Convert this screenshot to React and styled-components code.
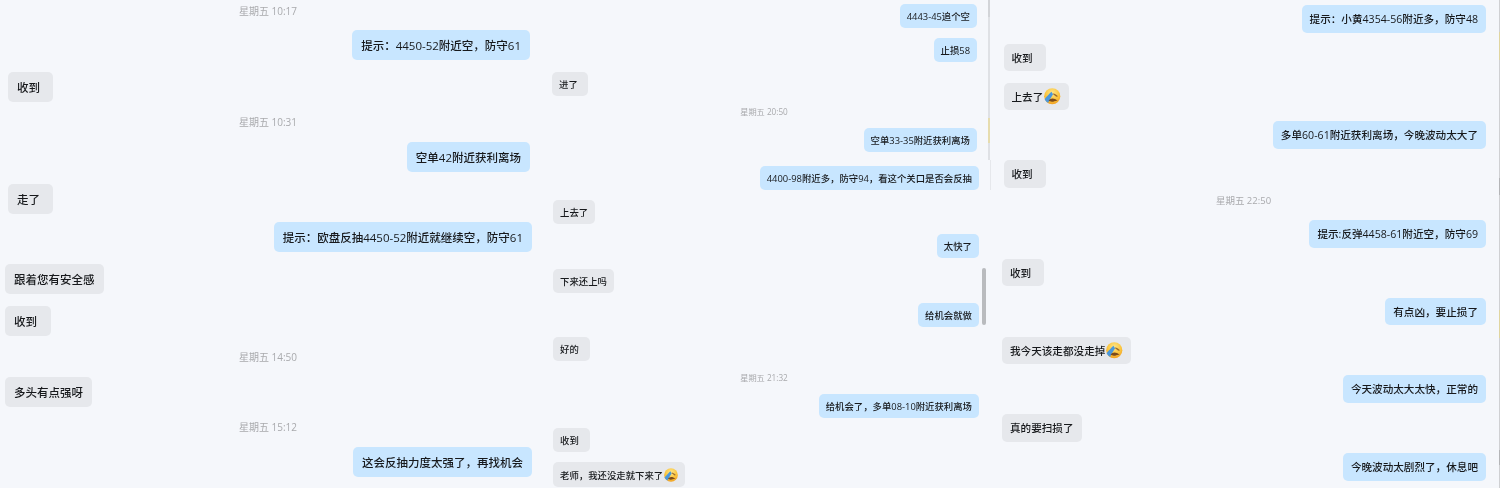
import React from "react";
import styled, { createGlobalStyle } from "styled-components";

const Global = createGlobalStyle`
  html, body { margin: 0; padding: 0; background: #f5f7fb; }
  #root { width: 1500px; height: 488px; overflow: hidden; }
`;

const Page = styled.main`
  position: relative;
  display: grid;
  grid-template-columns: 540px 450px 510px;
  width: 1500px;
  height: 488px;
  overflow: hidden;
  background: #f5f7fb;
  font-family: "Open Sans", "Noto Sans CJK SC", sans-serif;
  filter: blur(0.4px);
`;

const Column = styled.section`
  display: flex;
  flex-direction: column;
  height: 488px;
  overflow: hidden;
  font-size: ${(p) => p.$font}px;
`;

const Stamp = styled.div`
  flex: none;
  height: ${(p) => p.$h}px;
  line-height: ${(p) => p.$h}px;
  margin-top: ${(p) => p.$gap}px;
  padding-right: ${(p) => p.$shift}px;
  text-align: center;
  font-size: ${(p) => p.$font}px;
  color: #a9aaad;
`;

const Row = styled.div`
  flex: none;
  display: flex;
  justify-content: ${(p) => (p.$side === "r" ? "flex-end" : "flex-start")};
  margin-top: ${(p) => p.$gap}px;
  padding: ${(p) => (p.$side === "r" ? `0 ${p.$inset}px 0 0` : `0 0 0 ${p.$inset}px`)};
`;

const Bubble = styled.div`
  display: flex;
  align-items: center;
  box-sizing: border-box;
  height: ${(p) => p.$h}px;
  min-width: ${(p) => p.$min || 0}px;
  padding: 0 ${(p) => p.$pad}px;
  border-radius: 5px;
  white-space: nowrap;
  font-weight: 500;
  color: #17191c;
  background: ${(p) => (p.$side === "r" ? "#c8e6ff" : "#e6e8ec")};
`;

const EmojiSvg = styled.svg`
  flex: none;
  width: ${(p) => p.$size}px;
  height: ${(p) => p.$size}px;
  margin-left: 1px;
`;

const Divider = styled.div`
  position: absolute;
  left: 988px;
  top: 0;
  width: 2px;
  height: 160px;
  background: linear-gradient(#d2d4d8 0 17px, #dfe1e5 17px 118px, #e6dcae 118px 143px, #dfe1e5 143px);
`;

const DividerTail = styled.div`
  position: absolute;
  left: 990px;
  top: 160px;
  width: 1px;
  height: 30px;
  background: #e6e8ec;
`;

const Thumb = styled.div`
  position: absolute;
  left: 982px;
  top: 268px;
  width: 4px;
  height: 57px;
  border-radius: 2px;
  background: #b9bbbe;
`;

const RightEdge = styled.div`
  position: absolute;
  right: 0;
  top: 0;
  width: 1px;
  height: 488px;
  background: linear-gradient(
    #cfd0d3 0 32px,
    #e0d5a0 32px 60px,
    #cfd0d3 60px 178px,
    #b4b5b8 178px 195px,
    #cfd0d3 195px 310px,
    #e0d5a0 310px 338px,
    #cfd0d3 338px 450px,
    #b4b5b8 450px 465px,
    #cfd0d3 465px
  );
`;

const Emoji = ({ size, id }) => (
  <EmojiSvg $size={size} viewBox="0 0 20 20" aria-hidden="true">
    <defs>
      <radialGradient id={id} cx="50%" cy="30%" r="75%">
        <stop offset="0%" stopColor="#fde68a" />
        <stop offset="55%" stopColor="#fbc63f" />
        <stop offset="100%" stopColor="#ef9a1c" />
      </radialGradient>
    </defs>
    <circle cx="10" cy="10" r="9.8" fill={`url(#${id})`} />
    <path d="M9 4.5 C6.5 7 3.5 10 .8 13.5 C1.8 15.5 3.5 17 5 17.8 C7 14 9.5 10 11 7.5 Z" fill="#4a98dc" />
    <path d="M11.5 6.5 C13.5 7.5 15.5 8.5 17 10 L15 10.6 C13.5 9.4 12.5 8.4 11 7.5 Z" fill="#9a6a2c" />
    <path d="M5.5 15.5 C8 12 12 11.5 16.5 15.5 C13.5 14.8 12 17 9.5 16.8 C8 16.6 6.8 15.8 5.5 15.5 Z" fill="#7a4a1c" />
  </EmojiSvg>
);

const col1 = [
  { time: "星期五 10:17", gap: 4 },
  { side: "r", gap: 12, inset: 10, text: "提示：4450-52附近空，防守61" },
  { side: "l", gap: 12, inset: 8, text: "收到", min: 45 },
  { time: "星期五 10:31", gap: 13 },
  { side: "r", gap: 13, inset: 10, text: "空单42附近获利离场" },
  { side: "l", gap: 12, inset: 8, text: "走了", min: 45 },
  { side: "r", gap: 8, inset: 8, text: "提示：欧盘反抽4450-52附近就继续空，防守61" },
  { side: "l", gap: 12, inset: 5, text: "跟着您有安全感" },
  { side: "l", gap: 12, inset: 5, text: "收到", min: 46 },
  { time: "星期五 14:50", gap: 14 },
  { side: "l", gap: 13, inset: 5, text: "多头有点强呀" },
  { time: "星期五 15:12", gap: 13 },
  { side: "r", gap: 13, inset: 8, text: "这会反抽力度太强了，再找机会" },
];

const col2 = [
  { side: "r", gap: 4, inset: 13, text: "4443-45追个空" },
  { side: "r", gap: 10, inset: 13, text: "止损58" },
  { side: "l", gap: 10, inset: 12, text: "进了", min: 36 },
  { time: "星期五 20:50", gap: 10 },
  { side: "r", gap: 10, inset: 13, text: "空单33-35附近获利离场" },
  { side: "r", gap: 14, inset: 11, text: "4400-98附近多，防守94，看这个关口是否会反抽" },
  { side: "l", gap: 10, inset: 13, text: "上去了" },
  { side: "r", gap: 10, inset: 11, text: "太快了" },
  { side: "l", gap: 11, inset: 13, text: "下来还上吗" },
  { side: "r", gap: 10, inset: 11, text: "给机会就做" },
  { side: "l", gap: 10, inset: 13, text: "好的", min: 37 },
  { time: "星期五 21:32", gap: 11 },
  { side: "r", gap: 10, inset: 11, text: "给机会了，多单08-10附近获利离场" },
  { side: "l", gap: 10, inset: 13, text: "收到", min: 37 },
  { side: "l", gap: 10, inset: 13, h: 25, text: "老师，我还没走就下来了", emoji: true },
];

const col3 = [
  { side: "r", gap: 5, inset: 14, text: "提示：小黄4354-56附近多，防守48" },
  { side: "l", gap: 11, inset: 13.5, text: "收到", min: 42 },
  { side: "l", gap: 11.5, inset: 13.5, text: "上去了", emoji: true },
  { side: "r", gap: 11, inset: 14, text: "多单60-61附近获利离场，今晚波动太大了" },
  { side: "l", gap: 11.5, inset: 13.5, text: "收到", min: 42 },
  { time: "星期五 22:50", gap: 6.5 },
  { side: "r", gap: 12, inset: 14, text: "提示:反弹4458-61附近空，防守69" },
  { side: "l", gap: 11, inset: 12, text: "收到", min: 42 },
  { side: "r", gap: 11.5, inset: 14, text: "有点凶，要止损了" },
  { side: "l", gap: 11.5, inset: 12, text: "我今天该走都没走掉", emoji: true },
  { side: "r", gap: 11, inset: 14, text: "今天波动太大太快，正常的" },
  { side: "l", gap: 11.5, inset: 12, text: "真的要扫损了" },
  { side: "r", gap: 11.5, inset: 14, text: "今晚波动太剧烈了，休息吧" },
];

const columns = [
  { items: col1, font: 11.5, pad: 9, h: 30, stampFont: 10, stampH: 14, shift: 4, emoji: 18 },
  { items: col2, font: 9.4, pad: 7, h: 24, stampFont: 8.2, stampH: 12, shift: 2, emoji: 14 },
  { items: col3, font: 10.6, pad: 8, h: 27.5, stampFont: 9.5, stampH: 14, shift: 3, emoji: 16.5 },
];

export default function App() {
  return (
    <Page>
      <Global />
      {columns.map((c, i) => (
        <Column key={i} $font={c.font}>
          {c.items.map((m, j) =>
            m.time ? (
              <Stamp key={j} $gap={m.gap} $h={c.stampH} $font={c.stampFont} $shift={c.shift}>
                {m.time}
              </Stamp>
            ) : (
              <Row key={j} $side={m.side} $gap={m.gap} $inset={m.inset}>
                <Bubble $side={m.side} $h={m.h || c.h} $pad={c.pad} $min={m.min}>
                  {m.text}
                  {m.emoji && <Emoji size={c.emoji} id={`emoji-${i}-${j}`} />}
                </Bubble>
              </Row>
            )
          )}
        </Column>
      ))}
      <Divider />
      <DividerTail />
      <Thumb />
      <RightEdge />
    </Page>
  );
}
